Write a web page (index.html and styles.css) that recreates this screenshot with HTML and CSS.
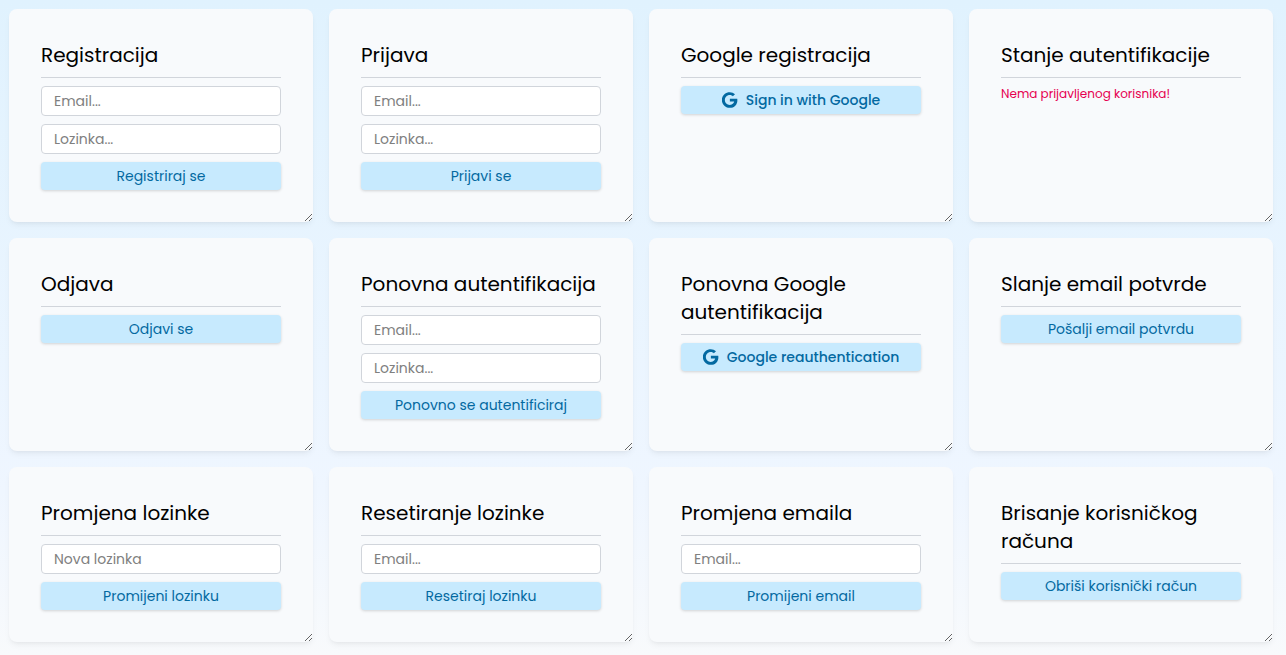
FILE: index.html
```html
<!DOCTYPE html>
<html lang="hr">
<head>
<meta charset="utf-8">
<meta name="viewport" content="width=device-width, initial-scale=1">
<title>Autentifikacija</title>
<link rel="stylesheet" href="styles.css">
</head>
<body>
<svg class="sprite" aria-hidden="true">
  <symbol id="google" viewBox="1.2 0.5 23 23"><path d="M12.500 10.300h10.600c.15.7.2 1.200.2 1.900C23.300 18.700 18.900 23.300 12.300 23.300 6 23.300 1 18.300 1 12S6 .7 12.300 .7c3.050 0 5.600 1.100 7.600 2.950l-3.100 3C15.950 5.850 14.500 4.900 12.300 4.900c-3.850 0-7 3.200-7 7.100s3.150 7.100 7 7.100c4.450 0 6.150-3.200 6.400-4.850h-6.200z"/></symbol>
</svg>
<main class="grid">
  <form class="card">
    <h2 class="card-title">Registracija</h2>
    <input class="field" type="email" placeholder="Email..." aria-label="Email">
    <input class="field" type="password" placeholder="Lozinka..." aria-label="Lozinka">
    <button class="btn" type="button">Registriraj se</button>
  </form>
  <form class="card">
    <h2 class="card-title">Prijava</h2>
    <input class="field" type="email" placeholder="Email..." aria-label="Email">
    <input class="field" type="password" placeholder="Lozinka..." aria-label="Lozinka">
    <button class="btn" type="button">Prijavi se</button>
  </form>
  <section class="card">
    <h2 class="card-title">Google registracija</h2>
    <button class="btn btn-google" type="button"><svg class="icon" aria-hidden="true"><use href="#google"/></svg>Sign in with Google</button>
  </section>
  <section class="card">
    <h2 class="card-title">Stanje autentifikacije</h2>
    <p class="status">Nema prijavljenog korisnika!</p>
  </section>
  <section class="card">
    <h2 class="card-title">Odjava</h2>
    <button class="btn" type="button">Odjavi se</button>
  </section>
  <form class="card">
    <h2 class="card-title">Ponovna autentifikacija</h2>
    <input class="field" type="email" placeholder="Email..." aria-label="Email">
    <input class="field" type="password" placeholder="Lozinka..." aria-label="Lozinka">
    <button class="btn" type="button">Ponovno se autentificiraj</button>
  </form>
  <section class="card">
    <h2 class="card-title">Ponovna Google autentifikacija</h2>
    <button class="btn btn-google" type="button"><svg class="icon" aria-hidden="true"><use href="#google"/></svg>Google reauthentication</button>
  </section>
  <section class="card">
    <h2 class="card-title">Slanje email potvrde</h2>
    <button class="btn" type="button">Pošalji email potvrdu</button>
  </section>
  <form class="card">
    <h2 class="card-title">Promjena lozinke</h2>
    <input class="field" type="password" placeholder="Nova lozinka" aria-label="Nova lozinka">
    <button class="btn" type="button">Promijeni lozinku</button>
  </form>
  <form class="card">
    <h2 class="card-title">Resetiranje lozinke</h2>
    <input class="field" type="email" placeholder="Email..." aria-label="Email">
    <button class="btn" type="button">Resetiraj lozinku</button>
  </form>
  <form class="card">
    <h2 class="card-title">Promjena emaila</h2>
    <input class="field" type="email" placeholder="Email..." aria-label="Email">
    <button class="btn" type="button">Promijeni email</button>
  </form>
  <section class="card">
    <h2 class="card-title">Brisanje korisničkog računa</h2>
    <button class="btn" type="button">Obriši korisnički račun</button>
  </section>
</main>
</body>
</html>
```
FILE: styles.css
```css
*,
*::before,
*::after {
  box-sizing: border-box;
}

body {
  margin: 0;
  min-height: 100vh;
  background: linear-gradient(to bottom, #e0f2fe, #eff6ff 75%, #f8fafc);
  color: #000;
  font-family: Poppins, Inter, "Open Sans", sans-serif;
}

.sprite {
  display: none;
}

.grid {
  display: grid;
  grid-template-columns: repeat(4, minmax(0, 1fr));
  gap: 16px;
  padding: 9px 13px 13px 9px;
}

.card {
  display: flex;
  flex-direction: column;
  gap: 8px;
  padding: 32px;
  overflow: auto;
  resize: both;
  border-radius: 8px;
  background: #f8fafc;
  box-shadow: 0 4px 6px -1px rgb(0 0 0 / 5%), 0 2px 4px -2px rgb(0 0 0 / 5%);
}

.card-title {
  margin: 0;
  padding-bottom: 8px;
  border-bottom: 1px solid #d1d5db;
  font-size: 20px;
  font-weight: 400;
  line-height: 28px;
}

.field {
  width: 100%;
  height: 30px;
  padding: 0 12px;
  border: 1px solid #d1d5db;
  border-radius: 4px;
  background: #fff;
  font: inherit;
  font-size: 14px;
}

.field::placeholder {
  color: #808080;
  opacity: 1;
}

.btn {
  display: flex;
  align-items: center;
  justify-content: center;
  gap: 8px;
  height: 28px;
  flex-shrink: 0;
  padding: 0 12px;
  border: 0;
  border-radius: 4px;
  background: #c7eafe;
  box-shadow: 0 1px 3px rgb(0 0 0 / 16%);
  color: #0369a1;
  font: inherit;
  font-size: 14px;
  line-height: 20px;
  cursor: pointer;
}

.btn-google {
  font-weight: 500;
}

.icon {
  width: 16px;
  height: 16px;
  fill: currentColor;
}

.status {
  margin: 0;
  color: #e60050;
  font-size: 12px;
  line-height: 16px;
}
```
